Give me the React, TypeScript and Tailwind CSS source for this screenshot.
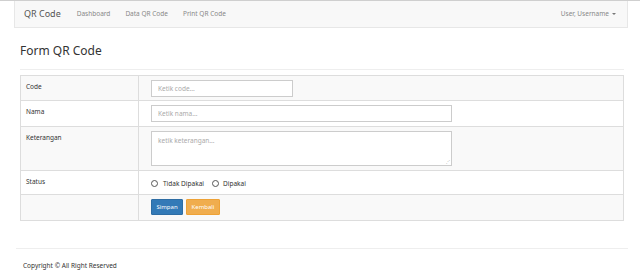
import React from "react";

const font = { fontFamily: '"Noto Sans", "Open Sans", sans-serif' };

export default function App() {
  return (
    <div className="w-[640px] h-[275px] bg-white overflow-hidden text-[#333]" style={font}>
      <div className="h-px bg-[#cfcfcf]" />
      <nav className="mx-[14px] w-[614px] h-[27px] bg-[#f8f8f8] border border-t-0 border-[#e7e7e7] flex items-center pl-[9px] pr-[9px]">
        <span className="text-[9px] text-[#555] mr-[16px]">QR Code</span>
        <span className="text-[6.5px] text-[#888] mr-[15px]">Dashboard</span>
        <span className="text-[6.5px] text-[#888] mr-[15px]">Data QR Code</span>
        <span className="text-[6.5px] text-[#888]">Print QR Code</span>
        <span className="ml-auto text-[6.5px] text-[#888] flex items-center gap-[3px] mr-[2px]">
          User, Username
          <span className="inline-block w-0 h-0 border-l-[2px] border-r-[2px] border-t-[2px] border-l-transparent border-r-transparent border-t-[#777]" />
        </span>
      </nav>
      <div className="mx-[20px] w-[604px]">
        <h1 className="text-[12px] leading-none mt-[17px] text-[#333]">Form QR Code</h1>
        <div className="mt-[12px] h-px bg-[#eee]" />
        <div className="mt-[5px] border border-[#ddd] text-[6.5px]">
          <Row bg="bg-[#f9f9f9]" h="h-[25px]" label="Code">
            <input placeholder="Ketik code..." className="w-[142px] h-[17px] border border-[#ccc] bg-white px-[6px] text-[6.5px] placeholder:text-[#aaa] mt-[4px]" readOnly />
          </Row>
          <Row bg="bg-white" h="h-[26px]" label="Nama">
            <input placeholder="Ketik nama..." className="w-[301px] h-[17px] border border-[#ccc] bg-white px-[6px] text-[6.5px] placeholder:text-[#aaa] mt-[4px]" readOnly />
          </Row>
          <Row bg="bg-[#f9f9f9]" h="h-[44px]" label="Keterangan">
            <div className="relative mt-[4px] w-[301px] h-[35px] border border-[#ccc] bg-white px-[6px] pt-[4px] text-[6.5px] text-[#aaa]">
              ketik keterangan...
              <span className="absolute right-[1px] bottom-[1px] text-[4px] leading-none text-[#aaa]">⋰</span>
            </div>
          </Row>
          <Row bg="bg-white" h="h-[24px]" label="Status">
            <div className="flex items-center mt-[8px] text-[6.5px] text-[#333]">
              <span className="w-[7px] h-[7px] rounded-full border border-[#555] mr-[5px]" />
              <span className="mr-[8px]">Tidak Dipakai</span>
              <span className="w-[7px] h-[7px] rounded-full border border-[#555] mr-[4px]" />
              <span>Dipakai</span>
            </div>
          </Row>
          <Row bg="bg-[#f9f9f9]" h="h-[25px]" label="" last>
            <div className="flex gap-[3px] mt-[4px]">
              <span className="w-[32px] h-[16px] bg-[#337ab7] border border-[#2e6da4] text-white text-[6px] flex items-center justify-center rounded-[1px]">Simpan</span>
              <span className="w-[34px] h-[16px] bg-[#f0ad4e] border border-[#eea236] text-white text-[6px] flex items-center justify-center rounded-[1px]">Kembali</span>
            </div>
          </Row>
        </div>
      </div>
      <div className="mx-[16px] w-[612px] mt-[27px] h-px bg-[#eee]" />
      <div className="ml-[23px] mt-[12px] text-[6.5px] text-[#333]">Copyright © All Right Reserved</div>
    </div>
  );
}

function Row({
  bg,
  h,
  label,
  children,
  last,
}: {
  bg: string;
  h: string;
  label: string;
  children: React.ReactNode;
  last?: boolean;
}) {
  return (
    <div className={`flex ${bg} ${h} ${last ? "" : "border-b border-[#ddd]"}`}>
      <div className="w-[118px] shrink-0 border-r border-[#ddd] pl-[5px] pt-[6px] text-[#333]">{label}</div>
      <div className="pl-[12px]">{children}</div>
    </div>
  );
}
